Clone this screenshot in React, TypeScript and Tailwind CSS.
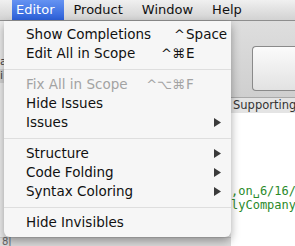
import React from "react";

const font = { fontFamily: '"DejaVu Sans", "Lucida Grande", sans-serif' };

function Arrow() {
  return (
    <svg width="7" height="9" viewBox="0 0 7 9" className="block">
      <path d="M0 0 L7 4.5 L0 9 Z" fill="#3a3a3a" />
    </svg>
  );
}

type Item = {
  label: string;
  mods?: string;
  key?: string;
  disabled?: boolean;
  sub?: boolean;
};

function Row({ item }: { item: Item }) {
  const color = item.disabled ? "text-[#a3a3a3]" : "text-[#111]";
  return (
    <div className={`flex h-[19px] items-center ${color}`}>
      <div className="w-[22px] shrink-0" />
      <div className="w-[118px] shrink-0 text-[13.5px] leading-none whitespace-nowrap">{item.label}</div>
      <div className="w-[42px] shrink-0 pr-[1px] text-right text-[13px] leading-none whitespace-nowrap">{item.mods}</div>
      <div className="w-[40px] shrink-0 text-[13.5px] leading-none whitespace-nowrap">{item.key}</div>
      {item.sub && (
        <div className="ml-[-12px] flex items-center">
          <Arrow />
        </div>
      )}
    </div>
  );
}

function Sep() {
  return (
    <div className="flex h-[12px] items-center">
      <div className="h-px w-full bg-[#dedede]" />
    </div>
  );
}

export default function App() {
  const groups: Item[][] = [
    [
      { label: "Show Completions", mods: "^", key: "Space" },
      { label: "Edit All in Scope", mods: "^⌘", key: "E" },
    ],
    [
      { label: "Fix All in Scope", mods: "^⌥⌘", key: "F", disabled: true },
      { label: "Hide Issues" },
      { label: "Issues", sub: true },
    ],
    [
      { label: "Structure", sub: true },
      { label: "Code Folding", sub: true },
      { label: "Syntax Coloring", sub: true },
    ],
    [{ label: "Hide Invisibles" }],
  ];

  return (
    <div className="relative h-[246px] w-[295px] overflow-hidden bg-white" style={font}>
      {/* menu bar */}
      <div className="flex h-[21px] items-stretch border-b border-[#8e8e8e] bg-gradient-to-b from-[#f0f0f0] to-[#d2d2d2] text-[13px] text-[#111]">
        <div className="w-[12px] shrink-0" />
        <div className="flex items-center bg-gradient-to-b from-[#6593f2] to-[#2c5fd8] pl-[4px] pr-[10px] text-white">Editor</div>
        <div className="flex items-center pl-[9px] pr-[19px]">Product</div>
        <div className="flex items-center pr-[19px]">Window</div>
        <div className="flex items-center">Help</div>
      </div>

      {/* background window */}
      <div className="flex h-[225px]">
        <div className="flex w-[231px] shrink-0 flex-col bg-[#ececec]">
          <div className="flex flex-1 flex-col pt-[34px] text-[11px] leading-[14px] text-[#444]">
            <div className="w-[4px] overflow-hidden">a</div>
            <div className="w-[4px] overflow-hidden bg-[#d4d4d4]">i</div>
          </div>
          <div className="flex h-[9px] items-center border-t border-[#c8c8c8] bg-[#dcdcdc] pl-[2px] text-[10px] leading-none text-[#666]">
            8|
          </div>
        </div>
        <div className="flex min-w-0 flex-1 flex-col overflow-hidden">
          <div className="flex h-[76px] flex-col justify-end bg-gradient-to-b from-[#dedede] to-[#cfcfcf] pb-[6px] pl-[21px]">
            <div className="h-[45px] rounded-l-[4px] border border-r-0 border-[#8a8a8a] bg-gradient-to-b from-[#fbfbfb] to-[#e2e2e2]" />
          </div>
          <div className="flex h-[16px] items-center border-t border-[#a9a9a9] bg-[#e4e4e4] pl-[2px] text-[11.5px] whitespace-nowrap text-[#333]">
            Supporting Files
          </div>
          <div className="flex-1 bg-white pt-[71px] text-[12px] leading-[14px] text-[#2a8a2a]" style={{ fontFamily: '"DejaVu Sans Mono", monospace' }}>
            <div className="whitespace-nowrap">‚on␣6/16/12</div>
            <div className="whitespace-nowrap">lyCompany</div>
          </div>
        </div>
      </div>

      {/* dropdown menu */}
      <div className="absolute left-[4px] top-[21px] w-[227px] rounded-b-[6px] bg-[#f6f6f6] pt-[4px] pb-[5px] shadow-[0_4px_10px_rgba(0,0,0,0.35)]">
        {groups.map((g, gi) => (
          <React.Fragment key={gi}>
            {gi > 0 && <Sep />}
            {g.map((it) => (
              <Row key={it.label} item={it} />
            ))}
          </React.Fragment>
        ))}
      </div>
    </div>
  );
}
